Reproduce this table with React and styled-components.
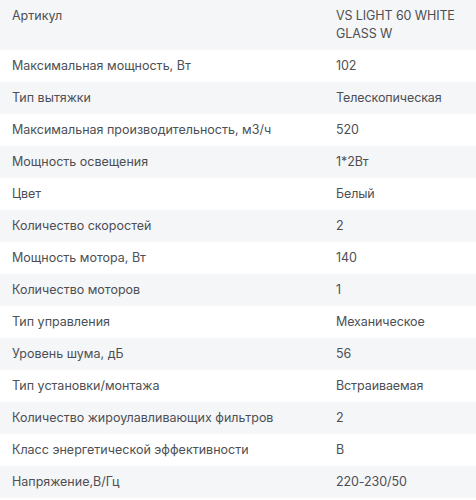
import React from 'react';
import styled, { createGlobalStyle } from 'styled-components';

const GlobalStyle = createGlobalStyle`
    body {
        margin: 0;
        background: #fff;
        font-family: Inter, "Noto Sans", sans-serif;
    }
`;

const Table = styled.div`
    width: 476px;
    display: flex;
    flex-direction: column;
`;

const Row = styled.div`
    display: grid;
    grid-template-columns: 324px minmax(0, 1fr);
    padding: 7px 4px 7px 12px;
    background: ${props => props.striped ? '#f5f6f8' : '#fff'};
    font-size: 12.5px;
    line-height: 18px;
    color: #4d4f54;
`;

const Label = styled.div`
    padding-right: 12px;
`;

const Value = styled.div`
    letter-spacing: -0.1px;
`;

const specs = [
    ['Артикул', 'VS LIGHT 60 WHITE GLASS W'],
    ['Максимальная мощность, Вт', '102'],
    ['Тип вытяжки', 'Телескопическая'],
    ['Максимальная производительность, м3/ч', '520'],
    ['Мощность освещения', '1*2Вт'],
    ['Цвет', 'Белый'],
    ['Количество скоростей', '2'],
    ['Мощность мотора, Вт', '140'],
    ['Количество моторов', '1'],
    ['Тип управления', 'Механическое'],
    ['Уровень шума, дБ', '56'],
    ['Тип установки/монтажа', 'Встраиваемая'],
    ['Количество жироулавливающих фильтров', '2'],
    ['Класс энергетической эффективности', 'B'],
    ['Напряжение,В/Гц', '220-230/50']
];

export default function App() {
    return (
        <>
            <GlobalStyle />
            <Table>
                { specs.map(([label, value], i) => (
                    <Row key={ label } striped={ i % 2 === 0 }>
                        <Label>{ label }</Label>
                        <Value>{ value }</Value>
                    </Row>
                )) }
            </Table>
        </>
    );
}
